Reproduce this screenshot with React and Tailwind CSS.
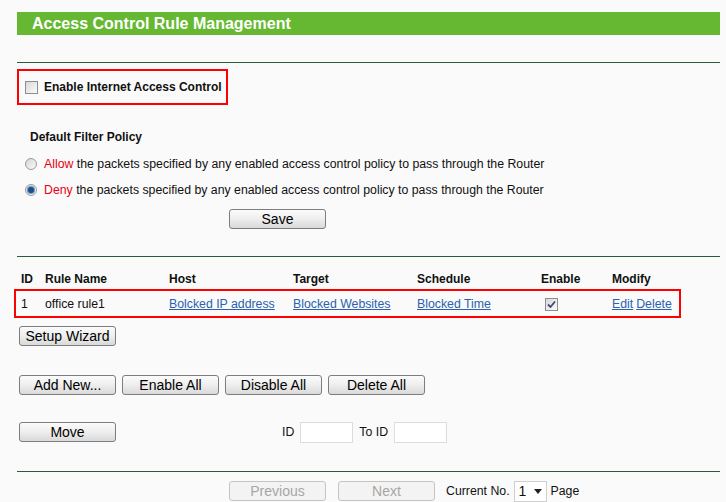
import React from 'react';

function Btn({ children, disabled, className = '' }) {
  return (
    <button
      className={`h-[20px] w-[97px] rounded-[3px] border text-[14px] leading-[18px] ${
        disabled
          ? 'border-[#c4c4c4] bg-[#f3f3f3] text-[#a6a6a6]'
          : 'border-[#7d7d7d] bg-gradient-to-b from-[#fbfbfb] via-[#eeeeee] to-[#d9d9d9] text-black'
      } ${className}`}
    >
      {children}
    </button>
  );
}

function Check({ checked }) {
  return (
    <span className="flex h-[13px] w-[13px] shrink-0 items-center justify-center border border-[#8e8e8e] bg-gradient-to-br from-[#d8d8d8] to-[#fbfbfb]">
      {checked && (
        <svg width="9" height="9" viewBox="0 0 9 9">
          <path d="M1 4.5 L3.5 7 L8 1.5" fill="none" stroke="#3c4a78" strokeWidth="1.8" />
        </svg>
      )}
    </span>
  );
}

function Radio({ checked }) {
  return (
    <span className="flex h-[12px] w-[12px] shrink-0 items-center justify-center rounded-full border border-[#9a9a9a] bg-gradient-to-br from-[#d6d6d6] to-[#fafafa]">
      {checked && <span className="h-[6px] w-[6px] rounded-full bg-[#1f4f86] ring-1 ring-[#6a9ad0]" />}
    </span>
  );
}

function Line({ className = '' }) {
  return <div className={`h-px w-[703px] bg-[#2c5a3b] ${className}`} />;
}

export default function App() {
  const cols = 'grid grid-cols-[24px_124px_124px_124px_124px_71px_1fr] items-center';
  const link = 'text-[#2a62b0] underline';

  return (
    <div className="h-[502px] w-full overflow-hidden bg-[#fafafa] pl-[17px] pt-[12px] text-[12.3px] text-[#111] font-['Liberation_Sans',Arial,sans-serif]">
      <div className="h-[23px] w-[703px] bg-[#66b832] pl-[15px] text-[16px] font-bold leading-[23px] text-white">
        Access Control Rule Management
      </div>

      <Line className="mt-[27px]" />

      <div className="mt-[6px] flex h-[36px] w-[211px] items-center gap-[6px] border-2 border-[#ff0000] pl-[6px] text-[12px]">
        <Check />
        <span className="font-bold">Enable Internet Access Control</span>
      </div>

      <div className="mt-[25px] pl-[13px] text-[12px] font-bold leading-[14px]">Default Filter Policy</div>

      <div className="mt-[13px] flex items-center gap-[7px] pl-[8px] leading-[14px]">
        <Radio />
        <span>
          <span className="text-[#e60012]">Allow</span> the packets specified by any enabled access control policy to pass through the Router
        </span>
      </div>
      <div className="mt-[12px] flex items-center gap-[7px] pl-[8px] leading-[14px]">
        <Radio checked />
        <span>
          <span className="text-[#e60012]">Deny</span> the packets specified by any enabled access control policy to pass through the Router
        </span>
      </div>

      <div className="mt-[12px] pl-[212px]">
        <Btn>Save</Btn>
      </div>

      <Line className="mt-[27px]" />

      <div className={`${cols} mt-[15px] pl-[4px] text-[12px] font-bold leading-[14px]`}>
        <span>ID</span>
        <span>Rule Name</span>
        <span>Host</span>
        <span>Target</span>
        <span>Schedule</span>
        <span>Enable</span>
        <span>Modify</span>
      </div>

      <div className={`${cols} -ml-[3px] mt-[3px] h-[29px] w-[667px] border-2 border-[#ff0000] pl-[5px]`}>
        <span>1</span>
        <span>office rule1</span>
        <span className={`${link} w-fit`}>Bolcked IP address</span>
        <span className={`${link} w-fit`}>Blocked Websites</span>
        <span className={`${link} w-fit`}>Blocked Time</span>
        <span className="pl-[4px] pt-[2px]">
          <Check checked />
        </span>
        <span className="flex gap-[3px]">
          <span className={link}>Edit</span>
          <span className={link}>Delete</span>
        </span>
      </div>

      <div className="mt-[8px] pl-[2px]">
        <Btn>Setup Wizard</Btn>
      </div>

      <div className="mt-[28px] flex gap-[6px] pl-[2px]">
        <Btn>Add New...</Btn>
        <Btn>Enable All</Btn>
        <Btn>Disable All</Btn>
        <Btn>Delete All</Btn>
      </div>

      <div className="mt-[27px] flex items-center pl-[2px]">
        <Btn>Move</Btn>
        <span className="ml-[166px]">ID</span>
        <span className="ml-[6px] h-[21px] w-[53px] border border-[#dcdcdc] bg-white" />
        <span className="ml-[6px]">To ID</span>
        <span className="ml-[6px] h-[21px] w-[53px] border border-[#dcdcdc] bg-white" />
      </div>

      <Line className="mt-[28px]" />

      <div className="mt-[9px] flex items-center pl-[212px]">
        <Btn disabled>Previous</Btn>
        <Btn disabled className="ml-[12px]">Next</Btn>
        <span className="ml-[11px]">Current No.</span>
        <span className="ml-[4px] flex h-[21px] w-[33px] items-center justify-between border border-[#cfcfcf] bg-white pl-[4px] pr-[4px] text-[14px]">
          1
          <svg width="8" height="5" viewBox="0 0 8 5">
            <path d="M0 0 H8 L4 5 Z" fill="#222" />
          </svg>
        </span>
        <span className="ml-[4px]">Page</span>
      </div>
    </div>
  );
}
